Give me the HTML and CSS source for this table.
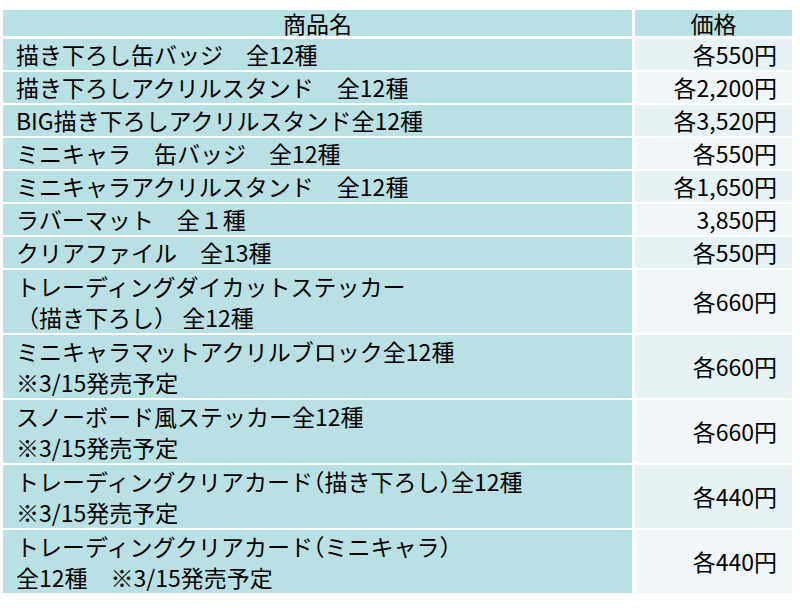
FILE: index.html
```html
<!DOCTYPE html>
<html lang="ja">
<head>
<meta charset="utf-8">
<link rel="stylesheet" href="styles.css">
</head>
<body>
<div class="price-table">
  <div class="cell head"><span>商品名</span></div>
  <div class="cell head"><span>価格</span></div>

  <div class="cell name"><span>描き下ろし缶バッジ　全12種</span></div>
  <div class="cell price odd"><span>各550円</span></div>

  <div class="cell name"><span>描き下ろしアクリルスタンド　全12種</span></div>
  <div class="cell price even"><span>各2,200円</span></div>

  <div class="cell name"><span>BIG描き下ろしアクリルスタンド全12種</span></div>
  <div class="cell price odd"><span>各3,520円</span></div>

  <div class="cell name"><span>ミニキャラ　缶バッジ　全12種</span></div>
  <div class="cell price even"><span>各550円</span></div>

  <div class="cell name"><span>ミニキャラアクリルスタンド　全12種</span></div>
  <div class="cell price odd"><span>各1,650円</span></div>

  <div class="cell name"><span>ラバーマット　全１種</span></div>
  <div class="cell price even"><span>3,850円</span></div>

  <div class="cell name"><span>クリアファイル　全13種</span></div>
  <div class="cell price odd"><span>各550円</span></div>

  <div class="cell name"><span>トレーディングダイカットステッカー<br>（描き下ろし）&nbsp;全12種</span></div>
  <div class="cell price even"><span>各660円</span></div>

  <div class="cell name"><span>ミニキャラマットアクリルブロック全12種<br>※3/15発売予定</span></div>
  <div class="cell price odd"><span>各660円</span></div>

  <div class="cell name"><span>スノーボード風ステッカー全12種<br>※3/15発売予定</span></div>
  <div class="cell price even"><span>各660円</span></div>

  <div class="cell name"><span><span class="halt">トレーディングクリアカード（描き下ろし）</span>全12種<br>※3/15発売予定</span></div>
  <div class="cell price odd"><span>各440円</span></div>

  <div class="cell name"><span><span class="halt">トレーディングクリアカード（ミニキャラ）</span><br>全12種　※3/15発売予定</span></div>
  <div class="cell price even"><span>各440円</span></div>
</div>
</body>
</html>
```

FILE: styles.css
```css
html, body {
  margin: 0;
  padding: 0;
  background: #ffffff;
}

body {
  font-family: "Noto Sans CJK JP", "Noto Sans", sans-serif;
  font-size: 23px;
  color: #000000;
}

.price-table {
  display: grid;
  grid-template-columns: 629px 157px;
  grid-template-rows: 27px repeat(7, 31px) repeat(5, 63px);
  column-gap: 3px;
  row-gap: 2px;
  margin: 10px 0 0 3px;
  width: 789px;
}

.cell {
  display: flex;
  align-items: center;
  line-height: 31px;
  white-space: nowrap;
}

.cell > span {
  display: block;
}

.head {
  background: #b9e0e3;
  justify-content: center;
  line-height: 27px;
  margin-bottom: 1px;
}

.name {
  background: #b9e0e3;
  padding-left: 13px;
}

.price {
  justify-content: flex-end;
  padding-right: 15px;
}

.odd {
  background: #e6f2f4;
}

.even {
  background: #f1f7f9;
}

.halt {
  font-feature-settings: "halt" 1;
}
```
